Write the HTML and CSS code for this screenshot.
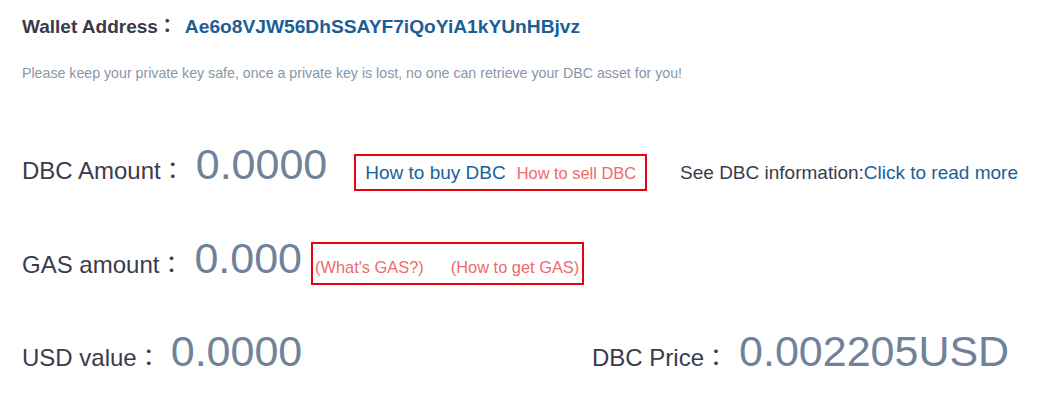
FILE: index.html
```html
<!DOCTYPE html>
<html lang="en">
<head>
<meta charset="utf-8">
<title>Wallet</title>
<link rel="stylesheet" href="styles.css">
</head>
<body>
<div class="page">
  <div class="address-row">
    <span class="address-label">Wallet Address：</span>
    <span class="address-value">Ae6o8VJW56DhSSAYF7iQoYiA1kYUnHBjvz</span>
  </div>
  <p class="note">Please keep your private key safe, once a private key is lost, no one can retrieve your DBC asset for you!</p>

  <div class="row row-dbc">
    <span class="label">DBC Amount：</span>
    <span class="amount amount-dbc">0.0000</span>
    <span class="box box-dbc">
      <a class="link-blue">How to buy DBC</a>
      <a class="link-pink">How to sell DBC</a>
    </span>
    <span class="info">See DBC information:<a class="link-blue">Click to read more</a></span>
  </div>

  <div class="row row-gas">
    <span class="label">GAS amount：</span>
    <span class="amount amount-gas">0.000</span>
    <span class="box box-gas">
      <a class="link-pink">(What's GAS?)</a>
      <a class="link-pink">(How to get GAS)</a>
    </span>
  </div>

  <div class="row row-usd">
    <div class="cell cell-usd">
      <span class="label">USD value：</span>
      <span class="amount amount-usd">0.0000</span>
    </div>
    <div class="cell">
      <span class="label">DBC Price：</span>
      <span class="amount amount-price">0.002205USD</span>
    </div>
  </div>
</div>
</body>
</html>
```

FILE: styles.css
```css
* { box-sizing: border-box; }
html, body { margin: 0; padding: 0; background: #fff; }
body {
  font-family: "Liberation Sans", "Noto Sans CJK JP", Arial, sans-serif;
  color: #3b3b4b;
}
.page {
  padding: 14px 0 0 22px;
}
.address-row {
  display: flex;
  align-items: baseline;
  font-size: 19px;
  font-weight: bold;
  line-height: 26px;
}
.address-label { color: #3a3a48; }
.address-value { color: #1b5e96; margin-left: 8px; font-size: 19.2px; }
.note {
  margin: 24px 0 0 0;
  font-size: 14.2px;
  line-height: 18px;
  color: #8896aa;
}
.row {
  display: flex;
  align-items: baseline;
}
.row-dbc { margin-top: 56px; }
.row-gas { margin-top: 41px; }
.row-usd { margin-top: 40px; }
.label {
  font-size: 24px;
  color: #3b3b4b;
}
.amount {
  font-size: 43px;
  color: #6f8299;
  line-height: 52px;
}
.amount-dbc { margin-left: 11px; }
.amount-gas { margin-left: 11px; }
.amount-usd { margin-left: 10px; }
.amount-price { margin-left: 11px; }
.box {
  display: inline-flex;
  align-items: baseline;
  border: 2px solid #e8020c;
}
.box-dbc {
  margin-left: 27px;
  padding: 6px 9px 5px 9px;
  gap: 11px;
}
.box-gas {
  margin-left: 9px;
  padding: 14px 3px 6px 2px;
  gap: 27px;
}
.link-blue {
  font-size: 19px;
  color: #1b6199;
}
.link-pink {
  font-size: 16.4px;
  color: #f0696b;
}
.info {
  margin-left: 33px;
  font-size: 19px;
  color: #3b3b4b;
}
.cell {
  display: flex;
  align-items: baseline;
}
.cell-usd { width: 570px; }
```
